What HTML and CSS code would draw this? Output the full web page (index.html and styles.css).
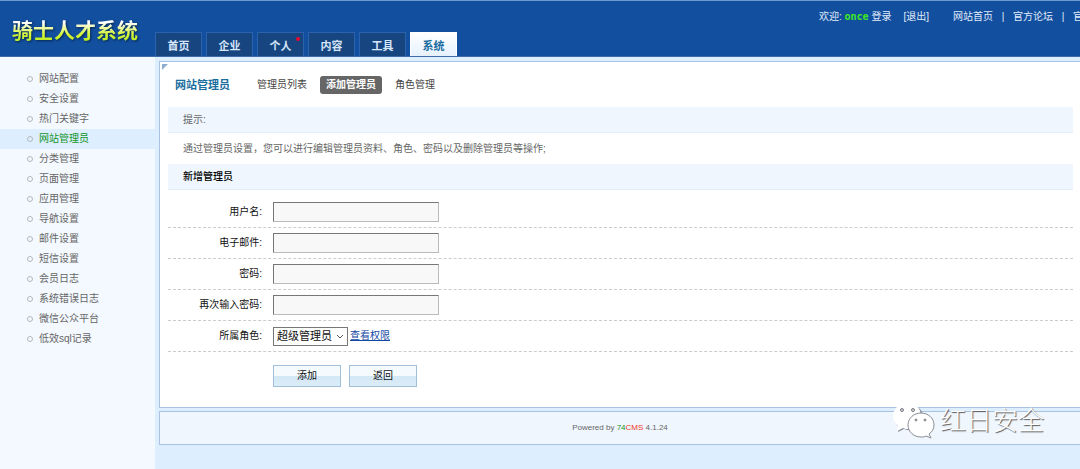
FILE: index.html
```html
<!DOCTYPE html>
<html lang="zh-CN">
<head>
<meta charset="utf-8">
<title>骑士人才系统</title>
<link rel="stylesheet" href="styles.css">
</head>
<body>
<header class="header">
  <div class="logo">骑士人才系统</div>
  <nav class="tabs">
    <a class="tab" href="#">首页</a>
    <a class="tab" href="#">企业</a>
    <a class="tab" href="#">个人<span class="dot"></span></a>
    <a class="tab" href="#">内容</a>
    <a class="tab" href="#">工具</a>
    <a class="tab tab-active" href="#">系统</a>
  </nav>
  <div class="topbar">
    <span class="welcome">欢迎: <b class="user">once</b> 登录</span>
    <a class="logout" href="#">[退出]</a>
    <a href="#">网站首页</a>
    <span class="sep">|</span>
    <a href="#">官方论坛</a>
    <span class="sep">|</span>
    <a href="#">官方网站</a>
  </div>
</header>
<div class="body">
  <aside class="sidebar">
    <ul class="menu">
      <li><a href="#">网站配置</a></li>
      <li><a href="#">安全设置</a></li>
      <li><a href="#">热门关键字</a></li>
      <li class="current"><a href="#">网站管理员</a></li>
      <li><a href="#">分类管理</a></li>
      <li><a href="#">页面管理</a></li>
      <li><a href="#">应用管理</a></li>
      <li><a href="#">导航设置</a></li>
      <li><a href="#">邮件设置</a></li>
      <li><a href="#">短信设置</a></li>
      <li><a href="#">会员日志</a></li>
      <li><a href="#">系统错误日志</a></li>
      <li><a href="#">微信公众平台</a></li>
      <li><a href="#">低效sql记录</a></li>
    </ul>
  </aside>
  <main class="main">
    <section class="panel">
      <span class="corner"></span>
      <div class="panel-head">
        <h1 class="title">网站管理员</h1>
        <nav class="subnav">
          <a href="#">管理员列表</a>
          <a class="subnav-active" href="#">添加管理员</a>
          <a href="#">角色管理</a>
        </nav>
      </div>
      <div class="bar">提示:</div>
      <p class="tip">通过管理员设置，您可以进行编辑管理员资料、角色、密码以及删除管理员等操作;</p>
      <h2 class="bar bar-strong">新增管理员</h2>
      <form class="form">
        <div class="row"><label for="name">用户名:</label><input id="name" type="text"></div>
        <div class="row"><label for="email">电子邮件:</label><input id="email" type="text"></div>
        <div class="row"><label for="pwd">密码:</label><input id="pwd" type="password"></div>
        <div class="row"><label for="pwd2">再次输入密码:</label><input id="pwd2" type="password"></div>
        <div class="row">
          <label for="role">所属角色:</label>
          <span class="select-box">
            <select id="role"><option>超级管理员</option></select>
            <svg class="chevron" viewBox="0 0 8 5" width="8" height="5"><path d="M1 1l3 3 3-3" fill="none" stroke="#555"/></svg>
          </span>
          <a class="perm" href="#">查看权限</a>
        </div>
        <div class="actions">
          <button type="submit">添加</button>
          <button type="button">返回</button>
        </div>
      </form>
    </section>
    <footer class="footer">Powered by <span class="green">74</span><span class="red">CMS</span> 4.1.24</footer>
  </main>
</div>
<div class="watermark">
  <svg class="wechat" viewBox="0 0 42 36" width="42" height="36">
    <path fill="#888d93" d="M15 2C7 2 1 7 1 14c0 4 2 8 5 10l-1 5 6-3c2 1 4 1 6 1 8 0 13-5 13-13S24 2 15 2z"/>
    <path fill="#fff" d="M14 0C6 0 0 6 0 13c0 4 2 8 5 10l-1 5 6-3c2 1 3 1 5 1 8 0 13-5 13-13S22 0 14 0z"/>
    <path fill="#fff" stroke="#888d93" d="M28 10c-7 0-13 5-13 12s6 12 13 12c2 0 4 0 5-1l5 2-2-4c3-2 5-5 5-9 0-7-6-12-13-12z"/>
    <g fill="#d5d9dd" stroke="#777c82">
      <circle cx="9" cy="7" r="1.5"/><circle cx="20" cy="7" r="1.5"/>
      <circle cx="23" cy="17" r="1"/><circle cx="32" cy="17" r="1"/>
    </g>
  </svg>
  <span>红日安全</span>
</div>
</body>
</html>
```
FILE: styles.css
```css
*, *::before { box-sizing: border-box; }

body {
  margin: 0;
  min-height: 100vh;
  display: flex;
  flex-direction: column;
  position: relative;
  background: #ddeeff;
  color: #666;
  font: 10px/20px "Liberation Sans", "Noto Sans CJK SC", sans-serif;
}

a { color: inherit; text-decoration: none; }

.header {
  display: flex;
  height: 57px;
  overflow: hidden;
  background: #134f9f;
  border-top: 1px solid #6c9ad2;
  border-bottom: 1px solid #3f6ba9;
  color: #e0ecfa;
}

.logo {
  flex: 0 0 155px;
  padding: 4px 0 0 12px;
  align-self: center;
  font-size: 21px;
  line-height: 28px;
  font-weight: bold;
  color: transparent;
  background: linear-gradient(#ffffff 30%, #d8f53c 65%, #b8ec20 90%);
  background-clip: text;
  -webkit-background-clip: text;
  filter: drop-shadow(1px 1px 1px #06264f);
}

.tabs { display: flex; align-items: flex-end; gap: 4px; flex: 1; }

.tab {
  position: relative;
  width: 47px;
  height: 24px;
  border: 1px solid #2a62ad;
  border-bottom: 0;
  background: #17457f;
  color: #d5e6fa;
  font-size: 11px;
  font-weight: bold;
  line-height: 26px;
  text-align: center;
}

.tab-active {
  border-color: #fff;
  background: linear-gradient(#fff, #e6f1fd);
  color: #1a6d9e;
}

.dot {
  position: absolute;
  top: 4px;
  right: 3px;
  width: 4px;
  height: 4px;
  border-radius: 50%;
  background: #e3092c;
}

.topbar {
  display: flex;
  flex: 0 0 261px;
  padding-top: 6px;
  white-space: nowrap;
  overflow: hidden;
}

.topbar > * { flex-shrink: 0; }

.user { color: #3fe81e; font: bold 10px/20px "DejaVu Sans Mono", monospace; }
.logout { margin: 0 24px 0 12px; }
.sep { width: 20px; text-align: center; }

.body { display: flex; flex: 1; }

.sidebar { flex: 0 0 155px; background: #f4f9ff; }

.menu { margin: 0; padding: 12px 0 0; list-style: none; }

.menu li { display: flex; align-items: center; height: 20px; padding-left: 27px; }

.menu li::before {
  content: "";
  width: 6px;
  height: 6px;
  margin-right: 6px;
  border: 1px solid #b4b8bc;
  border-radius: 50%;
}

.menu .current { background: #ddeeff; color: #12951f; }

.main { flex: 1; min-width: 0; padding: 4px 0 0 4px; }

.panel {
  position: relative;
  border: 1px solid #a9c1e3;
  border-right: 0;
  background: #fff;
  padding: 0 7px 20px 8px;
}

.corner {
  position: absolute;
  top: 2px;
  left: 2px;
  border-top: 6px solid #8fadd0;
  border-right: 6px solid transparent;
}

.panel-head { display: flex; align-items: center; height: 45px; padding-left: 7px; }

.title { margin: 0 21px 0 0; font-size: 11px; color: #1a6d9e; }

.subnav { display: flex; gap: 7px; color: #444; }
.subnav a { padding: 0 6px; line-height: 18px; }
.subnav .subnav-active { border-radius: 3px; background: #666; color: #fff; font-weight: bold; }

.bar {
  margin: 0;
  padding-left: 15px;
  background: #eff6fe;
  border-bottom: 1px solid #e3eef8;
  font-size: 10px;
  font-weight: normal;
  line-height: 25px;
}

.bar-strong { color: #000; font-weight: 500; }

.tip { margin: 0; padding-left: 15px; line-height: 31px; }

.form { padding-top: 7px; color: #111; }

.row {
  display: flex;
  align-items: center;
  height: 31px;
  border-bottom: 1px dashed #ccc;
}

.row label { width: 94px; margin-right: 11px; text-align: right; }

.row input {
  width: 166px;
  height: 20px;
  border: 1px solid #bbb;
  border-top-color: #777;
  border-left-color: #777;
  background: #f8f8f8;
}

.select-box { position: relative; display: flex; margin-right: 2px; }

.row select {
  appearance: none;
  width: 75px;
  height: 19px;
  padding: 0 3px;
  border: 1px solid #777;
  border-radius: 0;
  background: #fff;
  color: #111;
  font: 11px/17px "Liberation Sans", "Noto Sans CJK SC", sans-serif;
}

.chevron { position: absolute; right: 4px; top: 7px; pointer-events: none; }

.perm { color: #134aa5; text-decoration: underline; }

.actions { display: flex; gap: 8px; padding: 13px 0 0 105px; }

.actions button {
  width: 68px;
  height: 22px;
  padding: 0;
  border: 1px solid #9fbfda;
  background: linear-gradient(#f5fafe 50%, #d3e7f5 50%, #dcedf8);
  color: #111;
  font: 10px/20px "Liberation Sans", "Noto Sans CJK SC", sans-serif;
}

.footer {
  margin-top: 3px;
  border: 1px solid #a9c1e3;
  border-right: 0;
  background: #eff6fe;
  font-size: 8px;
  line-height: 32px;
  text-align: center;
}

.green { color: #12951f; }
.red { color: #f0392b; }

.watermark {
  position: absolute;
  right: 36px;
  bottom: 30px;
  display: flex;
  align-items: center;
  gap: 5px;
  color: #fff;
  font-size: 26px;
  font-weight: 300;
  line-height: 36px;
  text-shadow: 1px 1px 1px #555;
}
```
